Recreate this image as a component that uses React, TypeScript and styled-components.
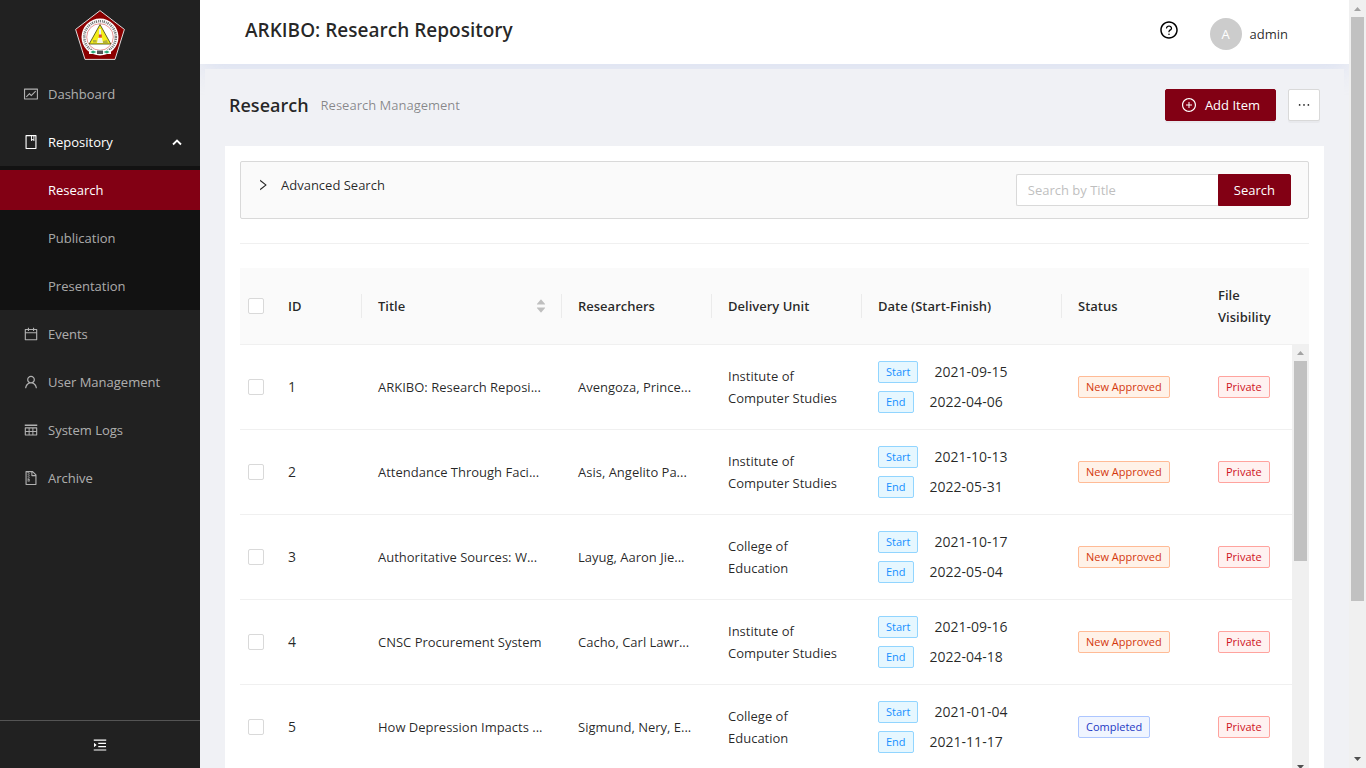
import React from "react";
import styled, { createGlobalStyle, css } from "styled-components";
import {
  AiOutlineFund,
  AiOutlineBook,
  AiOutlineCalendar,
  AiOutlineUser,
  AiOutlineInsertRowAbove,
  AiOutlineFileZip,
  AiOutlineMenuUnfold,
  AiOutlineQuestionCircle,
  AiOutlinePlusCircle,
  AiOutlineRight,
  AiOutlineEllipsis,
  AiFillCaretUp,
  AiFillCaretDown,
} from "react-icons/ai";

const colors = {
  brand: "#820014",
  text: "rgba(0, 0, 0, 0.85)",
  muted: "rgba(0, 0, 0, 0.45)",
  border: "#d9d9d9",
  line: "#f0f0f0",
  head: "#fafafa",
  page: "#f0f1f5",
  sider: "#212121",
  siderSub: "#121212",
};

const GlobalStyle = createGlobalStyle`
  * { box-sizing: border-box; }
  body {
    margin: 0;
    overflow: hidden;
    background: ${colors.page};
    color: ${colors.text};
    font: 13px/22px "Segoe UI", "Open Sans", sans-serif;
  }
  button, input { font: inherit; }
  a { color: inherit; text-decoration: none; }
`;

const Layout = styled.div`
  display: flex;
  height: 100vh;
  overflow: hidden;
`;

/* Sidebar */

const Sider = styled.aside`
  position: relative;
  z-index: 1;
  flex: 0 0 200px;
  display: flex;
  flex-direction: column;
  background: ${colors.sider};
  color: rgba(255, 255, 255, 0.65);
`;

const LogoBox = styled.div`
  display: flex;
  justify-content: center;
  padding: 10px 0;
`;

const Menu = styled.nav`
  flex: 1;
  padding-top: 4px;
`;

const MenuItem = styled.a<{ $active?: boolean; $nested?: boolean; $open?: boolean }>`
  display: flex;
  align-items: center;
  gap: 9px;
  height: 40px;
  margin-bottom: 8px;
  padding: 0 16px 0 ${(p) => (p.$nested ? 48 : 23)}px;
  ${(p) =>
    (p.$active || p.$open) &&
    css`
      color: #fff;
    `}
  ${(p) =>
    p.$active &&
    css`
      background: ${colors.brand};
    `}
  ${(p) =>
    p.$open &&
    css`
      margin-bottom: 4px;
    `}
`;

const MenuLabel = styled.span`
  flex: 1;
`;

const SubMenu = styled.div`
  margin-bottom: 4px;
  padding: 4px 0;
  background: ${colors.siderSub};

  & > :last-child {
    margin-bottom: 0;
  }
`;

const Trigger = styled.button`
  display: flex;
  align-items: center;
  justify-content: center;
  height: 48px;
  border: 0;
  border-top: 1px solid #545454;
  background: ${colors.sider};
  color: #fff;
`;

/* Main column */

const Main = styled.div`
  flex: 1;
  min-width: 0;
`;

const Header = styled.header`
  display: flex;
  align-items: center;
  height: 64px;
  padding: 0 61px 0 45px;
  background: #fff;
  box-shadow: 0 8px 24px -2px rgba(208, 217, 240, 0.7);
`;

const AppTitle = styled.h1`
  flex: 1;
  margin: 0;
  padding-bottom: 4px;
  font-size: 19px;
  line-height: 28px;
  font-weight: 600;
`;

const HelpButton = styled.button`
  display: flex;
  margin: 0 31px 4px 0;
  padding: 0;
  border: 0;
  background: none;
  color: #000;
`;

const Account = styled.a`
  display: flex;
  align-items: center;
  gap: 8px;
  padding-top: 4px;
`;

const Avatar = styled.span`
  width: 32px;
  height: 32px;
  border-radius: 50%;
  background: #ccc;
  color: #fff;
  line-height: 32px;
  text-align: center;
`;

const Content = styled.main`
  position: relative;
  margin: 5px;
  padding: 20px;
  background: ${colors.page};
`;

const PageHeader = styled.div`
  display: flex;
  align-items: center;
  gap: 12px;
  padding: 0 4px;
  margin-bottom: 25px;
`;

const PageTitle = styled.h2`
  margin: 0;
  font-size: 18px;
  line-height: 32px;
  font-weight: 600;
`;

const PageSubtitle = styled.span`
  flex: 1;
  color: ${colors.muted};
`;

const Button = styled.button<{ $primary?: boolean; $joined?: boolean }>`
  display: flex;
  align-items: center;
  justify-content: center;
  gap: 8px;
  height: 32px;
  padding: 0 ${(p) => (p.$primary ? 15 : 7)}px;
  border: 1px solid ${(p) => (p.$primary ? colors.brand : colors.border)};
  border-radius: ${(p) => (p.$joined ? "0 2px 2px 0" : "2px")};
  background: ${(p) => (p.$primary ? colors.brand : "#fff")};
  color: ${(p) => (p.$primary ? "#fff" : colors.text)};
  box-shadow: ${(p) => (p.$joined ? "none" : "0 2px 0 rgba(0, 0, 0, 0.03)")};
`;

const Card = styled.section`
  padding: 15px;
  background: #fff;
`;

const SearchPanel = styled.div`
  display: flex;
  align-items: flex-start;
  height: 58px;
  padding: 12px 17px 12px 15px;
  border: 1px solid ${colors.border};
  border-radius: 2px;
  background: ${colors.head};
`;

const Disclosure = styled.button`
  display: flex;
  align-items: center;
  gap: 11px;
  margin-right: auto;
  padding: 0;
  border: 0;
  background: none;
  color: ${colors.text};
`;

const SearchForm = styled.form`
  display: flex;
`;

const SearchInput = styled.input`
  width: 202px;
  height: 32px;
  padding: 0 11px;
  border: 1px solid ${colors.border};
  border-right: 0;
  border-radius: 2px 0 0 2px;
  background: #fff;

  &::placeholder {
    color: #bfbfbf;
    opacity: 1;
  }
`;

const Divider = styled.hr`
  height: 1px;
  margin: 24px 0;
  border: 0;
  background: ${colors.line};
`;

/* Table */

const TableWrap = styled.div`
  display: flex;
  min-height: 508px;
`;

const Table = styled.table`
  flex: 1;
  align-self: flex-start;
  width: 100%;
  table-layout: fixed;
  border-collapse: separate;
  border-spacing: 0;
`;

const HeadCell = styled.th`
  height: 77px;
  padding: 0 0 0 16px;
  border-bottom: 1px solid ${colors.line};
  background: ${colors.head};
  font-weight: 600;
  text-align: left;
`;

const HeadInner = styled.div<{ $rule?: boolean }>`
  display: flex;
  align-items: center;
  justify-content: space-between;
  min-height: 24px;
  padding-right: 14px;
  border-right: 1px solid ${(p) => (p.$rule ? "#ebebeb" : "transparent")};
`;

const Sorter = styled.button`
  display: flex;
  flex-direction: column;
  padding: 0;
  border: 0;
  background: none;
  color: #bfbfbf;

  & > :last-child {
    margin-top: -4px;
  }
`;

const Cell = styled.td`
  height: 85px;
  padding: 0 16px;
  border-bottom: 1px solid ${colors.line};
  white-space: nowrap;
`;

const NumberCell = styled(Cell)`
  font-size: 14px;
`;

const UnitCell = styled(Cell)`
  white-space: normal;
`;

const checkCell = css`
  padding: 0 8px;
  line-height: 0;
`;

const CheckHead = styled(HeadCell)`
  ${checkCell}
`;

const CheckCell = styled(Cell)`
  ${checkCell}
`;

const Checkbox = styled.input`
  appearance: none;
  width: 16px;
  height: 16px;
  margin: 0;
  border: 1px solid ${colors.border};
  border-radius: 2px;
  background: #fff;
`;

const DateLine = styled.div`
  display: flex;
  align-items: center;
  gap: 16px;
  height: 30px;
`;

const tones = {
  blue: ["#1890ff", "#e6f7ff", "#91d5ff"],
  volcano: ["#d4380d", "#fff2e8", "#ffbb96"],
  geekblue: ["#1d39c4", "#f0f5ff", "#adc6ff"],
  red: ["#cf1322", "#fff1f0", "#ffa39e"],
};

const Tag = styled.span<{ $tone: keyof typeof tones }>`
  display: block;
  width: fit-content;
  padding: 0 7px;
  border: 1px solid ${(p) => tones[p.$tone][2]};
  border-radius: 2px;
  background: ${(p) => tones[p.$tone][1]};
  color: ${(p) => tones[p.$tone][0]};
  font-size: 11px;
  line-height: 20px;
`;

/* Scroll bars */

const ScrollColumn = styled.div`
  flex: 0 0 17px;
  display: flex;
  flex-direction: column;
`;

const ScrollHead = styled.div`
  height: 76px;
  background: ${colors.head};
`;

const ScrollTrack = styled.div`
  flex: 1;
  display: flex;
  flex-direction: column;
  align-items: center;
  background: #f0f0f0;
`;

const ScrollThumb = styled.div<{ $size: string }>`
  width: 13px;
  height: ${(p) => p.$size};
  margin-bottom: auto;
  background: #c1c1c1;
`;

const ArrowSvg = styled.svg`
  display: block;
  flex: none;
`;

const ScrollArrow = ({ down = false }: { down?: boolean }) => (
  <ArrowSvg width="17" height="17" viewBox="0 0 17 17" aria-hidden="true">
    <path d={down ? "M5 6h7l-3.5 4z" : "M5 11h7l-3.5-4z"} fill={down ? "#505050" : "#a3a3a3"} />
  </ArrowSvg>
);

const Logo = () => (
  <svg width="50" height="50" viewBox="0 0 50 50" role="img" aria-label="College seal">
    <path d="M25 .6 49.4 19.4 40 49.4H10L.6 19.4z" fill="#8b0000" stroke="#ddd" strokeWidth="1" />
    <circle cx="25" cy="27" r="18.5" fill="#fff" />
    <circle cx="25" cy="27" r="15.800" fill="none" stroke="#777" strokeWidth="2.600" strokeDasharray="0.9 0.8 1.300 1" />
    <circle cx="25" cy="27" r="13.300" fill="#fff" stroke="#dd7b7b" strokeWidth="0.8" />
    <path d="M25 14.500 35.800 34H14.200z" fill="#f4ee18" stroke="#55551a" strokeWidth="0.9" />
    <path d="M24 19h2v6h-2z" fill="#ececec" />
    <path d="M23.800 24.500h3v3h-3z" fill="#d84a3a" />
    <path d="M23 28h4l1 5h-6z" fill="#f7f7e4" />
    <path d="M18 30h3.500v2.500H18zM28 31l4-1 1 3h-5z" fill="#b5b03c" />
    <path d="M14 40h22v4H14z" fill="#fff" />
    <path d="M15.500 42l2.500-1.500 3.500 1.500-3.500 1.500zM34.500 42 32 40.500 28.500 42l3.500 1.500z" fill="#2aa876" />
    <path d="M22 40.500h6v3.500h-6z" fill="#555" />
  </svg>
);

const nav = [
  { label: "Events", icon: AiOutlineCalendar },
  { label: "User Management", icon: AiOutlineUser },
  { label: "System Logs", icon: AiOutlineInsertRowAbove },
  { label: "Archive", icon: AiOutlineFileZip },
];

const columns = [
  { label: "ID", width: 90, rule: true },
  { label: "Title", width: 200, rule: true, sort: true },
  { label: "Researchers", width: 150, rule: true },
  { label: "Delivery Unit", width: 150, rule: true },
  { label: "Date (Start-Finish)", width: 200, rule: true },
  { label: "Status", width: 140 },
  { label: "File Visibility", width: 90 },
];

const rows = [
  { title: "ARKIBO: Research Reposi...", who: "Avengoza, Prince...", unit: "Institute of Computer Studies", start: "2021-09-15", end: "2022-04-06", status: "New Approved" },
  { title: "Attendance Through Faci...", who: "Asis, Angelito Pa...", unit: "Institute of Computer Studies", start: "2021-10-13", end: "2022-05-31", status: "New Approved" },
  { title: "Authoritative Sources: W...", who: "Layug, Aaron Jie...", unit: "College of Education", start: "2021-10-17", end: "2022-05-04", status: "New Approved" },
  { title: "CNSC Procurement System", who: "Cacho, Carl Lawr...", unit: "Institute of Computer Studies", start: "2021-09-16", end: "2022-04-18", status: "New Approved" },
  { title: "How Depression Impacts ...", who: "Sigmund, Nery, E...", unit: "College of Education", start: "2021-01-04", end: "2021-11-17", status: "Completed" },
];

export default function App() {
  return (
    <>
      <GlobalStyle />
      <Layout>
        <Sider>
          <LogoBox>
            <Logo />
          </LogoBox>
          <Menu>
            <MenuItem href="#dashboard">
              <AiOutlineFund size={16} />
              <MenuLabel>Dashboard</MenuLabel>
            </MenuItem>
            <MenuItem href="#repository" $open>
              <AiOutlineBook size={16} />
              <MenuLabel>Repository</MenuLabel>
              <svg width="14" height="10" viewBox="0 0 14 10" aria-hidden="true">
                <path d="M3 7.500 7 3.500 11 7.500" fill="none" stroke="#fff" strokeWidth="1.800" />
              </svg>
            </MenuItem>
            <SubMenu>
              <MenuItem href="#research" $nested $active>Research</MenuItem>
              <MenuItem href="#publication" $nested>Publication</MenuItem>
              <MenuItem href="#presentation" $nested>Presentation</MenuItem>
            </SubMenu>
            {nav.map(({ label, icon: Icon }) => (
              <MenuItem key={label} href="#section">
                <Icon size={16} />
                <MenuLabel>{label}</MenuLabel>
              </MenuItem>
            ))}
          </Menu>
          <Trigger type="button" aria-label="Toggle sidebar">
            <AiOutlineMenuUnfold size={16} />
          </Trigger>
        </Sider>

        <Main>
          <Header>
            <AppTitle>ARKIBO: Research Repository</AppTitle>
            <HelpButton type="button" aria-label="Help">
              <AiOutlineQuestionCircle size={20} />
            </HelpButton>
            <Account href="#account">
              <Avatar>A</Avatar>
              admin
            </Account>
          </Header>

          <Content>
            <PageHeader>
              <PageTitle>Research</PageTitle>
              <PageSubtitle>Research Management</PageSubtitle>
              <Button type="button" $primary>
                <AiOutlinePlusCircle size={16} />
                Add Item
              </Button>
              <Button type="button" aria-label="More actions">
                <AiOutlineEllipsis size={16} />
              </Button>
            </PageHeader>

            <Card>
              <SearchPanel>
                <Disclosure type="button" aria-expanded="false">
                  <AiOutlineRight size={14} />
                  Advanced Search
                </Disclosure>
                <SearchForm>
                  <SearchInput type="text" placeholder="Search by Title" aria-label="Search by Title" />
                  <Button type="button" $primary $joined>Search</Button>
                </SearchForm>
              </SearchPanel>
              <Divider />

              <TableWrap>
                <Table>
                  <colgroup>
                    <col style={{ width: 32 }} />
                    {columns.map((c) => (
                      <col key={c.label} style={{ width: c.width }} />
                    ))}
                  </colgroup>
                  <thead>
                    <tr>
                      <CheckHead>
                        <Checkbox type="checkbox" aria-label="Select all" />
                      </CheckHead>
                      {columns.map((c) => (
                        <HeadCell key={c.label}>
                          <HeadInner $rule={c.rule}>
                            {c.label}
                            {c.sort && (
                              <Sorter type="button" aria-label="Sort by title">
                                <AiFillCaretUp size={12} />
                                <AiFillCaretDown size={12} />
                              </Sorter>
                            )}
                          </HeadInner>
                        </HeadCell>
                      ))}
                    </tr>
                  </thead>
                  <tbody>
                    {rows.map((r, i) => (
                      <tr key={r.title}>
                        <CheckCell>
                          <Checkbox type="checkbox" aria-label={`Select row ${i + 1}`} />
                        </CheckCell>
                        <NumberCell>{i + 1}</NumberCell>
                        <Cell>{r.title}</Cell>
                        <Cell>{r.who}</Cell>
                        <UnitCell>{r.unit}</UnitCell>
                        <NumberCell>
                          <DateLine>
                            <Tag $tone="blue">Start</Tag>
                            {r.start}
                          </DateLine>
                          <DateLine>
                            <Tag $tone="blue">End</Tag>
                            {r.end}
                          </DateLine>
                        </NumberCell>
                        <Cell>
                          <Tag $tone={r.status === "Completed" ? "geekblue" : "volcano"}>{r.status}</Tag>
                        </Cell>
                        <Cell>
                          <Tag $tone="red">Private</Tag>
                        </Cell>
                      </tr>
                    ))}
                  </tbody>
                </Table>
                <ScrollColumn>
                  <ScrollHead />
                  <ScrollTrack>
                    <ScrollArrow />
                    <ScrollThumb $size="200px" />
                    <ScrollArrow down />
                  </ScrollTrack>
                </ScrollColumn>
              </TableWrap>
            </Card>
          </Content>
        </Main>

        <ScrollColumn>
          <ScrollTrack>
            <ScrollArrow />
            <ScrollThumb $size="76%" />
            <ScrollArrow down />
          </ScrollTrack>
        </ScrollColumn>
      </Layout>
    </>
  );
}
